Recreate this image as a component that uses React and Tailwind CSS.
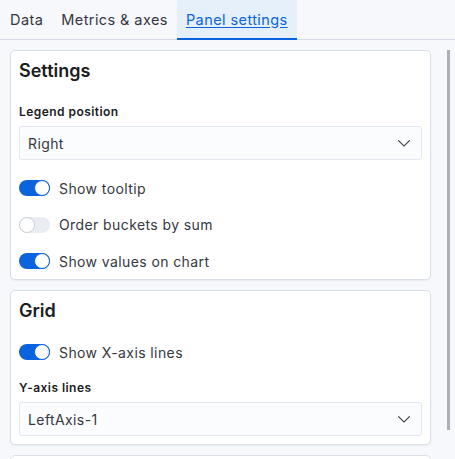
import React, { useState } from 'react';

const Chevron = () => (
    <svg className="w-[14px] h-[14px] text-[#343741]" viewBox="0 0 16 16" fill="none" stroke="currentColor">
        <path strokeWidth={1.3} d="M1.5 5l6.5 6.5L14.5 5" />
    </svg>
);

const Toggle = ({ on, label, onChange }) => (
    <button className="flex items-center h-5 text-left" onClick={onChange}>
        <span
            className={`relative w-[31px] h-4 rounded-full shrink-0 ${on ? 'bg-[#0b64dd]' : 'bg-[#e9edf3]'}`}
        >
            <span
                className={`absolute top-0 w-4 h-4 rounded-full bg-white border ${on ? 'left-[15px] border-[#0b64dd]' : 'left-0 border-[#c9cfd9]'}`}
            />
        </span>
        <span className="ml-[9px] text-[14px] tracking-[0.4px] text-[#343741]">{label}</span>
    </button>
);

const SelectBox = ({ value }) => (
    <div className="h-[34px] flex items-center justify-between pl-2 pr-[10px] bg-[#fbfcfd] border border-[#e3e8f0] rounded-[3px] text-[14px] tracking-[0.4px] text-[#343741]">
        <span>{value}</span>
        <Chevron />
    </div>
);

const Panel = ({ title, children }) => (
    <div className="bg-white border border-[#d9dfe9] rounded-[5px] p-2 shadow-[0_1px_2px_rgba(0,0,0,0.06)]">
        <h2 className="text-[18px] leading-6 font-semibold text-[#1a1c21]">{title}</h2>
        {children}
    </div>
);

const App = () => {
    const [tab] = useState('panel');
    const [opts, setOpts] = useState({ tooltip: true, order: false, values: true, xaxis: true });
    const flip = (k) => setOpts({ ...opts, [k]: !opts[k] });

    const tabs = [
        { id: 'data', title: 'Data' },
        { id: 'metrics', title: 'Metrics & axes' },
        { id: 'panel', title: 'Panel settings' }
    ];

    return (
        <div className="w-[455px] h-[459px] overflow-hidden bg-[#f7f8fc] flex flex-col" style={{ fontFamily: 'Inter, "Noto Sans", sans-serif' }}>
            {/* Tabs */}
            <div className="h-10 shrink-0 flex pl-[1px] border-b border-[#d3dae6]">
                {tabs.map((t) => (
                    <div
                        key={t.id}
                        className={`px-[9px] flex items-center text-[14.5px] tracking-[0.42px] ${tab === t.id
                            ? 'bg-[#e6f0fa] text-[#0b64dd] underline underline-offset-2 border-b-2 border-[#0b64dd] -mb-px pt-[1px]'
                            : 'text-[#343741]'
                            }`}
                    >
                        {t.title}
                    </div>
                ))}
            </div>

            {/* Content */}
            <div className="flex flex-1 min-h-0">
                <div className="w-[421px] ml-[10px] pt-[10px] flex flex-col gap-[10px]">
                    <Panel title="Settings">
                        <div className="mt-[21px] text-[12px] leading-4 font-semibold tracking-[0.45px] text-[#1a1c21]">Legend position</div>
                        <div className="mt-[6px]">
                            <SelectBox value="Right" />
                        </div>
                        <div className="mt-[18px] flex flex-col gap-[16.5px]">
                            <Toggle on={opts.tooltip} label="Show tooltip" onChange={() => flip('tooltip')} />
                            <Toggle on={opts.order} label="Order buckets by sum" onChange={() => flip('order')} />
                            <Toggle on={opts.values} label="Show values on chart" onChange={() => flip('values')} />
                        </div>
                    </Panel>

                    <Panel title="Grid">
                        <div className="mt-[19px]">
                            <Toggle on={opts.xaxis} label="Show X-axis lines" onChange={() => flip('xaxis')} />
                        </div>
                        <div className="mt-[18px] text-[12px] leading-4 font-semibold tracking-[0.45px] text-[#1a1c21]">Y-axis lines</div>
                        <div className="mt-[6px]">
                            <SelectBox value="LeftAxis-1" />
                        </div>
                    </Panel>

                    <div className="h-10 shrink-0 bg-white border border-[#d9dfe9] rounded-[5px]" />
                </div>

                {/* Scrollbar */}
                <div className="ml-4 mt-[10px] w-[3px] h-[380px] bg-[#a9b0bc]" />
            </div>
        </div>
    );
};

export default App;
